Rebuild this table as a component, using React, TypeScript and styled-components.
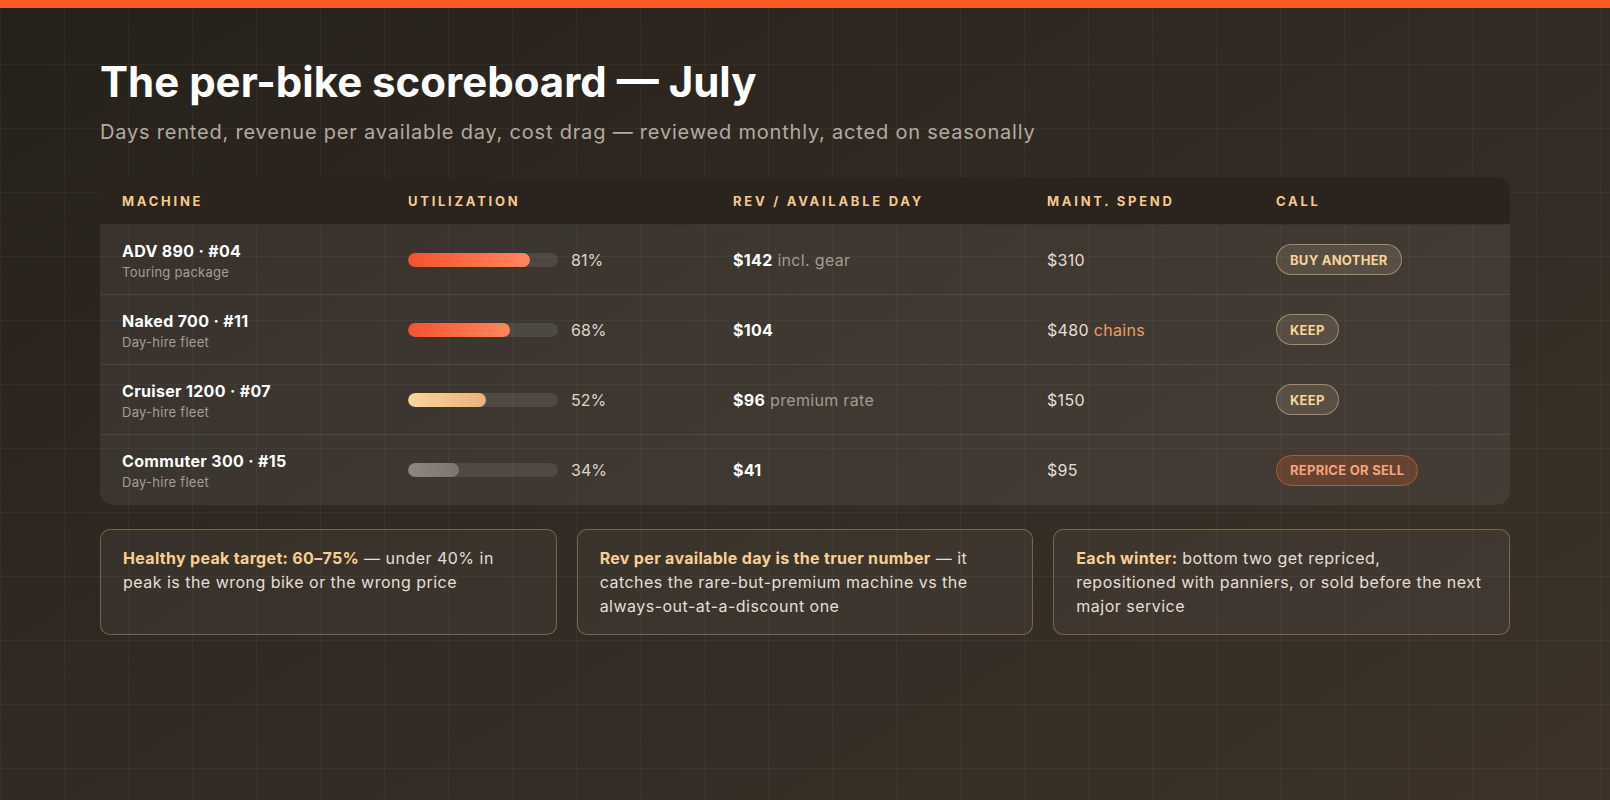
import React from "react";
import styled, { createGlobalStyle } from "styled-components";

const Global = createGlobalStyle`
  html, body { margin: 0; padding: 0; }
  body {
    background: #2e2721;
    font-family: Inter, "Noto Sans", sans-serif;
    -webkit-font-smoothing: antialiased;
  }
`;

const Page = styled.div`
  min-height: 800px;
  background-color: #2f2822;
  background-image:
    linear-gradient(rgba(255, 255, 255, 0.035) 1px, transparent 1px),
    linear-gradient(90deg, rgba(255, 255, 255, 0.035) 1px, transparent 1px),
    linear-gradient(150deg, #26201b 0%, #302922 40%, #3c3229 100%);
  background-size: 64px 64px, 64px 64px, 100% 100%;
  color: #f3ede6;
`;

const TopBar = styled.div`
  height: 8px;
  background: #fa5a20;
`;

const Content = styled.main`
  padding: 51px 100px 60px;
`;

const Title = styled.h1`
  margin: 0;
  font-size: 42px;
  line-height: 1.1;
  font-weight: 700;
  letter-spacing: 0;
  color: #ffffff;
`;

const Subtitle = styled.p`
  margin: 14px 0 0;
  font-size: 20px;
  line-height: 27px;
  letter-spacing: 0.8px;
  color: #b3aaa0;
`;

const Card = styled.section`
  margin-top: 31px;
  border-radius: 14px;
  overflow: hidden;
  background: rgba(255, 255, 255, 0.065);
`;

const COLS = "286px 325px 314px 229px 1fr";

const HeaderRow = styled.div`
  display: grid;
  grid-template-columns: ${COLS};
  align-items: center;
  height: 48px;
  padding: 0 22px;
  background: #2a231e;
  border-bottom: 1px solid rgba(255, 255, 255, 0.08);
  box-sizing: border-box;
`;

const HeadCell = styled.div`
  font-size: 13px;
  font-weight: 700;
  letter-spacing: 0.21em;
  text-transform: uppercase;
  color: #f5c98e;
`;

const Row = styled.div<{ $last?: boolean }>`
  display: grid;
  grid-template-columns: ${COLS};
  align-items: center;
  height: 70px;
  padding: 0 22px;
  box-sizing: border-box;
  border-bottom: ${(p) => (p.$last ? "none" : "1px solid rgba(255, 255, 255, 0.09)")};
`;

const Machine = styled.div`
  display: flex;
  flex-direction: column;
  gap: 2px;
  padding-top: 2px;
`;

const MachineName = styled.div`
  font-size: 16px;
  line-height: 20px;
  font-weight: 700;
  letter-spacing: 0.02em;
  color: #ffffff;
`;

const MachineSub = styled.div`
  font-size: 13px;
  line-height: 18px;
  letter-spacing: 0.02em;
  color: #a69d93;
`;

const Util = styled.div`
  display: flex;
  align-items: center;
  gap: 13px;
`;

const Track = styled.div`
  width: 150px;
  height: 14px;
  border-radius: 7px;
  background: rgba(255, 255, 255, 0.09);
  overflow: hidden;
`;

const fills: Record<string, string> = {
  hot: "linear-gradient(90deg, #f4532a, #ff875c)",
  warm: "linear-gradient(90deg, #fbd49c, #e8b37a)",
  cold: "linear-gradient(90deg, #8e8780, #7c756f)",
};

const Fill = styled.div<{ $tone: string }>`
  height: 100%;
  border-radius: 7px;
  background: ${(p) => fills[p.$tone]};
`;

const Pct = styled.span`
  font-size: 16px;
  color: #ddd5cb;
`;

const Value = styled.div`
  font-size: 16px;
  letter-spacing: 0.02em;
  color: #e6ded4;
`;

const Strong = styled.strong`
  font-weight: 700;
  color: #ffffff;
`;

const Muted = styled.span`
  color: #a39a90;
`;

const Accent = styled.span`
  color: #f09a6a;
`;

const Pill = styled.span<{ $danger?: boolean }>`
  display: inline-flex;
  align-items: center;
  height: 31px;
  padding: 0 13px;
  box-sizing: border-box;
  border-radius: 16px;
  font-size: 13px;
  font-weight: 700;
  letter-spacing: 0.02em;
  text-transform: uppercase;
  border: 1px solid ${(p) => (p.$danger ? "#bd5630" : "rgba(246, 212, 160, 0.45)")};
  background: ${(p) => (p.$danger ? "rgba(240, 95, 45, 0.2)" : "rgba(255, 232, 200, 0.12)")};
  color: ${(p) => (p.$danger ? "#f6a47b" : "#f8d49a")};
`;

const Notes = styled.div`
  display: grid;
  grid-template-columns: repeat(3, 1fr);
  gap: 20px;
  margin-top: 24px;
`;

const Note = styled.div`
  padding: 16px 22px;
  border: 1px solid rgba(246, 206, 150, 0.32);
  border-radius: 10px;
  background: rgba(255, 255, 255, 0.045);
  font-size: 16px;
  line-height: 24px;
  letter-spacing: 0.03em;
  text-wrap: pretty;
  color: #e6ded4;
`;

const NoteLead = styled.strong`
  font-weight: 700;
  letter-spacing: 0.02em;
  color: #f8cf92;
`;

type Bike = {
  name: string;
  sub: string;
  util: number;
  tone: string;
  rev: string;
  revNote?: string;
  maint: string;
  maintNote?: string;
  call: string;
  danger?: boolean;
};

const bikes: Bike[] = [
  { name: "ADV 890 · #04", sub: "Touring package", util: 81, tone: "hot", rev: "$142", revNote: "incl. gear", maint: "$310", call: "Buy another" },
  { name: "Naked 700 · #11", sub: "Day-hire fleet", util: 68, tone: "hot", rev: "$104", maint: "$480", maintNote: "chains", call: "Keep" },
  { name: "Cruiser 1200 · #07", sub: "Day-hire fleet", util: 52, tone: "warm", rev: "$96", revNote: "premium rate", maint: "$150", call: "Keep" },
  { name: "Commuter 300 · #15", sub: "Day-hire fleet", util: 34, tone: "cold", rev: "$41", maint: "$95", call: "Reprice or sell", danger: true },
];

export default function App() {
  return (
    <Page>
      <Global />
      <TopBar />
      <Content>
        <Title>The per-bike scoreboard — July</Title>
        <Subtitle>
          Days rented, revenue per available day, cost drag — reviewed monthly, acted on seasonally
        </Subtitle>
        <Card>
          <HeaderRow>
            <HeadCell>Machine</HeadCell>
            <HeadCell>Utilization</HeadCell>
            <HeadCell>Rev / available day</HeadCell>
            <HeadCell>Maint. spend</HeadCell>
            <HeadCell>Call</HeadCell>
          </HeaderRow>
          {bikes.map((b, i) => (
            <Row key={b.name} $last={i === bikes.length - 1}>
              <Machine>
                <MachineName>{b.name}</MachineName>
                <MachineSub>{b.sub}</MachineSub>
              </Machine>
              <Util>
                <Track>
                  <Fill $tone={b.tone} style={{ width: `${b.util}%` }} />
                </Track>
                <Pct>{b.util}%</Pct>
              </Util>
              <Value>
                <Strong>{b.rev}</Strong>
                {b.revNote && <Muted> {b.revNote}</Muted>}
              </Value>
              <Value>
                {b.maint}
                {b.maintNote && <Accent> {b.maintNote}</Accent>}
              </Value>
              <div>
                <Pill $danger={b.danger}>{b.call}</Pill>
              </div>
            </Row>
          ))}
        </Card>
        <Notes>
          <Note>
            <NoteLead>Healthy peak target: 60–75%</NoteLead> — under 40% in peak is the wrong bike or the wrong price
          </Note>
          <Note>
            <NoteLead>Rev per available day is the truer number</NoteLead> — it catches the rare-but-premium machine vs the always-out-at-a-discount one
          </Note>
          <Note>
            <NoteLead>Each winter:</NoteLead> bottom two get repriced, repositioned with panniers, or sold before the next major service
          </Note>
        </Notes>
      </Content>
    </Page>
  );
}
